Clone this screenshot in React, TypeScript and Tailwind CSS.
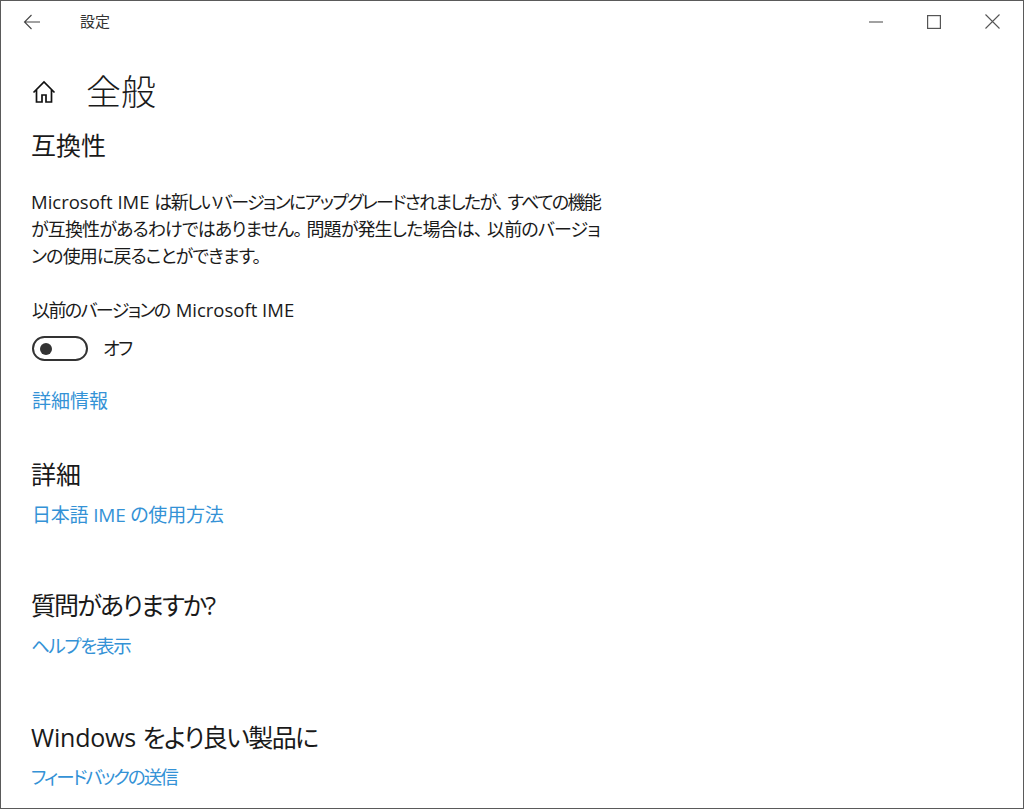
import React from "react";

const font = "[font-family:'Open_Sans','Noto_Sans_CJK_JP',sans-serif]";
const palt = "[font-feature-settings:'palt']";

function SectionLink({ children, className }: { children: React.ReactNode; className: string }) {
  return <a className={`block leading-[27px] text-[#3492d6] whitespace-nowrap ${palt} ${className}`}>{children}</a>;
}

// full width punctuation, the palt feature squeezes it otherwise
function Punct({ children }: { children: string }) {
  return <span className="mr-[5px]">{children}</span>;
}

export default function App() {
  return (
    <div className={`h-[809px] w-[1024px] overflow-hidden bg-white border border-[#5a5a5a] text-[#1a1a1a] ${font}`}>
      <div className="flex h-[41px] items-center">
        <svg className="ml-[22px] h-[18px] w-[18px] text-[#444]" viewBox="0 0 18 18" fill="none" stroke="currentColor" strokeWidth="1.1">
          <path d="M1.5 9H17M8.5 2 1.5 9l7 7" />
        </svg>
        <span className={`ml-[39px] text-[15px] text-[#333] ${palt}`}>設定</span>
        <div className="ml-auto flex items-center">
          <svg className="mr-[44px] h-[14px] w-[14px]" viewBox="0 0 14 14" fill="none" stroke="#555" strokeWidth="1.1">
            <path d="M0 7h14" />
          </svg>
          <svg className="mr-[44px] h-[14px] w-[14px]" viewBox="0 0 14 14" fill="none" stroke="#555" strokeWidth="1.2">
            <rect x="0.6" y="0.6" width="12.8" height="12.8" />
          </svg>
          <svg className="mr-[23px] h-[15px] w-[15px]" viewBox="0 0 15 15" fill="none" stroke="#555" strokeWidth="1.1">
            <path d="M0.5 0.5l14 14M14.5 0.5l-14 14" />
          </svg>
        </div>
      </div>

      <div className="flex items-center pl-[31px] pt-[24px]">
        <svg className="h-[24px] w-[24px] text-[#111]" viewBox="0 0 24 24" fill="none" stroke="currentColor" strokeWidth="1.7">
          <path d="M1.5 12.5 12 2l10.5 10.5M4.5 10v12h5.5v-7h4v7h5.5V10" />
        </svg>
        <h1 className="ml-[30px] text-[35px] leading-[52px] font-light">全般</h1>
      </div>

      <div className="pl-[30px]">
        <h2 className="mt-[9px] text-[25px] leading-[36px]">互換性</h2>
        <div className={`mt-[25px] text-[18px] leading-[27px] whitespace-nowrap ${palt}`}>
          <p>
            <span className="text-[18.5px]">Microsoft IME </span>
            <span className="tracking-[-1.65px]">は新しいバージョンにアップグレードされましたが<Punct>、</Punct>すべての機能</span>
          </p>
          <p className="tracking-[-0.85px]">が互換性があるわけではありません<Punct>。</Punct>問題が発生した場合は<Punct>、</Punct>以前のバージョ</p>
          <p className="tracking-[-0.85px]">ンの使用に戻ることができます。</p>
        </div>
        <p className={`mt-[26px] text-[18px] leading-[27px] whitespace-nowrap pl-[1px] ${palt}`}>
          <span className="tracking-[-1.6px]">以前のバージョンの</span>
          <span className="ml-[6px] text-[18.5px]">Microsoft IME</span>
        </p>
        <div className="mt-[11px] flex items-center">
          <div className="ml-[1px] flex h-[25px] w-[56px] items-center rounded-full border-2 border-[#333] pl-[6px]">
            <div className="h-[12px] w-[12px] rounded-full bg-[#333]" />
          </div>
          <span className={`ml-[15px] text-[18px] leading-[27px] tracking-[-1.5px] ${palt}`}>オフ</span>
        </div>
        <div className="mt-[26px] pl-[1px]"><SectionLink className="text-[19px]">詳細情報</SectionLink></div>

        <h2 className="mt-[41px] text-[25px] leading-[36px]">詳細</h2>
        <div className="mt-[10px] pl-[1px]"><SectionLink className="text-[19px] tracking-[-0.2px]">日本語 IME の使用方法</SectionLink></div>

        <h2 className={`mt-[58px] text-[25px] leading-[36px] tracking-[-1.9px] ${palt}`}>質問がありますか?</h2>
        <div className="mt-[9px]"><SectionLink className="text-[18.5px] tracking-[-1.3px]">ヘルプを表示</SectionLink></div>

        <h2 className={`mt-[60px] text-[25px] leading-[36px] ${palt}`}>
          <span className="tracking-[-0.2px]">Windows</span> <span className="tracking-[-1.6px]">をより良い製品に</span>
        </h2>
        <div className="mt-[8px]"><SectionLink className="text-[18.5px] tracking-[-2px]">フィードバックの送信</SectionLink></div>
      </div>
    </div>
  );
}
